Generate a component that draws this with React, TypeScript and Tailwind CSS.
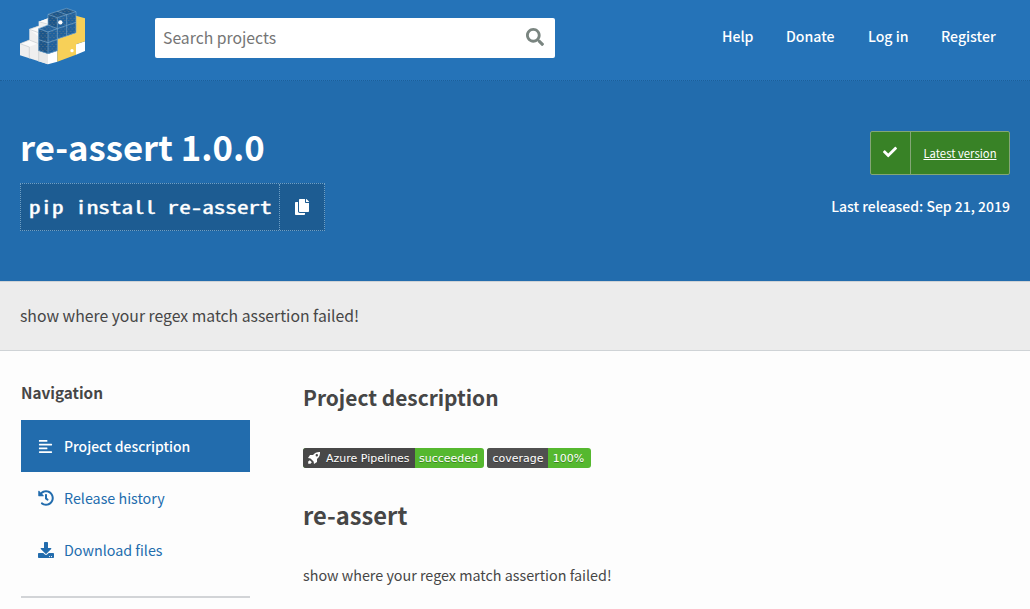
import { FaAlignLeft, FaCheck, FaCopy, FaDownload, FaHistory, FaSearch } from "react-icons/fa";

function Logo() {
  return (
    <svg className="block h-[60px] w-[67px]" viewBox="60 18 201 180" aria-hidden="true">
      <defs>
        <pattern id="specks" width="11" height="13" patternUnits="userSpaceOnUse">
          <circle cx="3" cy="3" r="1.3" fill="#a08a78" />
          <circle cx="8" cy="9" r="1.3" fill="#a08a78" />
        </pattern>
      </defs>
      <path d="M60 131 88 120V88l28-10V65l28-10v138l-84-27z" fill="#efefef" />
      <path d="m144 162 28-10v33l-28 8zM228 133l27-9v29l-27 11z" fill="#fff" />
      <path d="m116 154 28 8v31l-28-9z" fill="#e9e9e9" />
      <path d="m60 131 28-11 28 10-28 10zM88 88l28-10v32zM116 65l28-10v22z" fill="#fafafa" />
      <path d="m60 131 28 10v35M88 88l28 10v87M88 120l28 11M60 131l28-11M88 88l28-10M116 65l28 8" fill="none" stroke="#c4c8cc" strokeWidth="2" />
      <path d="m228 47 27 8v69l-27 9v31l-56 21v-68l56-19z" fill="#f7d058" />
      <path d="m116 86 28-11V43l56-18 28 10v63l-56 19v35l-28 9-28-9z" fill="#1f629f" />
      <path d="m116 86 28 10v65l-28-9zM144 43l28 10v33l-28-11zM144 43l56-18 28 10-56 18z" fill="#1b568b" />
      <path d="m116 86 28-11V43l56-18 28 10v63l-56 19v35l-28 9-28-9z" fill="url(#specks)" />
      <path d="m116 86 28-11 28 11-28 10zM144 43l56-18 28 10-56 18zM144 96v65M172 53v64M200 44v63M116 119l28 9 28-10M172 86l56-19M172 34l28 10M144 43v32M116 86v66l28 9 28-9v-35l56-19V35" fill="none" stroke="#79a9cf" strokeWidth="2" />
      <circle cx="181" cy="67" r="6.5" fill="#fff" />
      <circle cx="216" cy="152" r="5" fill="#fff" />
    </svg>
  );
}

function Rocket() {
  return (
    <svg className="block size-3.5" viewBox="0 0 14 14" fill="#fff" aria-hidden="true">
      <path fillRule="evenodd" d="M13 1c-3-.2-5.2.7-7 3H3L1 7l2.500.4L6.600 10.500 7 13l3-2V8c2.300-1.800 3.200-4 3-7zM9.800 3.100a1.200 1.200 0 1 1 0 2.400 1.200 1.200 0 0 1 0-2.400z" />
      <path d="M2.800 9.200 4.800 11.200 3.500 12.800H1.200v-2.300z" />
    </svg>
  );
}

export default function App() {
  return (
    <div className="h-[609px] w-[1030px] overflow-hidden bg-[#fdfdfd] font-['Noto_Sans_CJK_SC','Noto_Sans',sans-serif] text-[#464646]">
      <header className="flex h-[81px] items-start border-b border-dotted border-[#1c5e98] bg-[#2573b8] pl-5">
        <div className="mt-1.5 w-[135px]"><Logo /></div>
        <div className="mt-[18px] flex h-10 w-[400px] items-start justify-between rounded-xs bg-white pr-[11px] pl-2">
          <span className="text-[15.76px] leading-10 text-[#757575]">Search projects</span>
          <FaSearch className="mt-2.5 size-[18px] text-[#7a8580]" />
        </div>
        <nav className="mt-6 ml-[167px] flex text-[14.1px] leading-6 font-medium whitespace-nowrap text-white">
          <a className="w-16">Help</a>
          <a className="w-[82px]">Donate</a>
          <a className="w-[73px]">Log in</a>
          <a>Register</a>
        </nav>
      </header>
      <section className="flex h-[200px] justify-between bg-[#226cad] px-5 text-white">
        <div className="pt-[41px]">
          <h1 className="text-[34.7px] leading-[48px] font-bold whitespace-nowrap">re-assert 1.0.0</h1>
          <div className="mt-[13px] flex h-12 w-[305px] border border-dotted border-[#6f9fc5] bg-[#1d5c92]">
            <code className="w-[259px] border-r border-dotted border-[#6f9fc5] pl-2 font-['Noto_Sans_Mono_CJK_SC','DejaVu_Sans_Mono',monospace] text-[17.5px] leading-[45px] font-normal whitespace-nowrap">
              <span className="inline-block origin-left scale-x-[1.32] [-webkit-text-stroke:0.4px_white]">pip install re-assert</span>
            </code>
            <span className="flex flex-1 items-center justify-center"><FaCopy className="size-4" /></span>
          </div>
        </div>
        <div className="flex flex-col items-end pt-[50px]">
          <div className="flex h-11 w-[140px] rounded-xs border border-[#84a676] bg-[#388226]">
            <span className="flex w-10 items-center justify-center border-r border-[#84a676] pr-0.5 pb-0.5"><FaCheck className="size-3.5" /></span>
            <a className="flex-1 text-center text-[11.3px] leading-[43px] underline">Latest version</a>
          </div>
          <p className="mt-[19px] text-[14px] leading-6 font-medium whitespace-nowrap">Last released: Sep 21, 2019</p>
        </div>
      </section>
      <section className="h-[70px] border-y border-[#cfd3d6] bg-[#ececec] pl-5 text-[15.76px] leading-[68px]">show where your regex match assertion failed!</section>
      <main className="flex pl-[21px]">
        <aside className="w-[229px] pt-[29px]">
          <h3 className="text-[15.3px] leading-6 font-bold">Navigation</h3>
          <nav className="mt-4 border-b-2 border-[#d2d4d7] pb-5 text-[14.300px] leading-[52px] text-[#226cad]">
            <a className="flex h-[52px] items-center bg-[#226cad] pl-[17px] text-[13.95px] font-medium text-white"><FaAlignLeft className="mr-[11px] size-[15px]" />Project description</a>
            <a className="flex h-[52px] items-center pl-[17px]"><FaHistory className="mr-2.5 size-4" />Release history</a>
            <a className="flex h-[52px] items-center pl-[17px]"><FaDownload className="mr-2.5 size-4" />Download files</a>
          </nav>
        </aside>
        <article className="ml-[53px] pt-[30px]">
          <h2 className="text-[20.9px] leading-8 font-bold">Project description</h2>
          <div className="mt-[35px] flex h-5 gap-[3px] font-['DejaVu_Sans',sans-serif] text-[11px] leading-[22px] text-white [text-shadow:0_1px_0_rgba(0,0,0,.3)]">
            <span className="flex w-[181px] overflow-hidden rounded-[3px] bg-[#55b82f]">
              <span className="flex w-[112px] items-center gap-[5px] bg-[#484848] pl-1 whitespace-nowrap"><Rocket /><span className="pt-0.5">Azure Pipelines</span></span>
              <span className="flex-1 pr-0.5 text-center">succeeded</span>
            </span>
            <span className="flex w-[104px] overflow-hidden rounded-[3px] bg-[#55b82f]">
              <span className="w-[61px] bg-[#505050] pl-px text-center">coverage</span>
              <span className="flex-1 pr-0.5 text-center">100%</span>
            </span>
          </div>
          <h1 className="mt-[31px] text-[23.7px] leading-8 font-bold">re-assert</h1>
          <p className="mt-8 text-[14.33px] leading-6">show where your regex match assertion failed!</p>
        </article>
      </main>
    </div>
  );
}
